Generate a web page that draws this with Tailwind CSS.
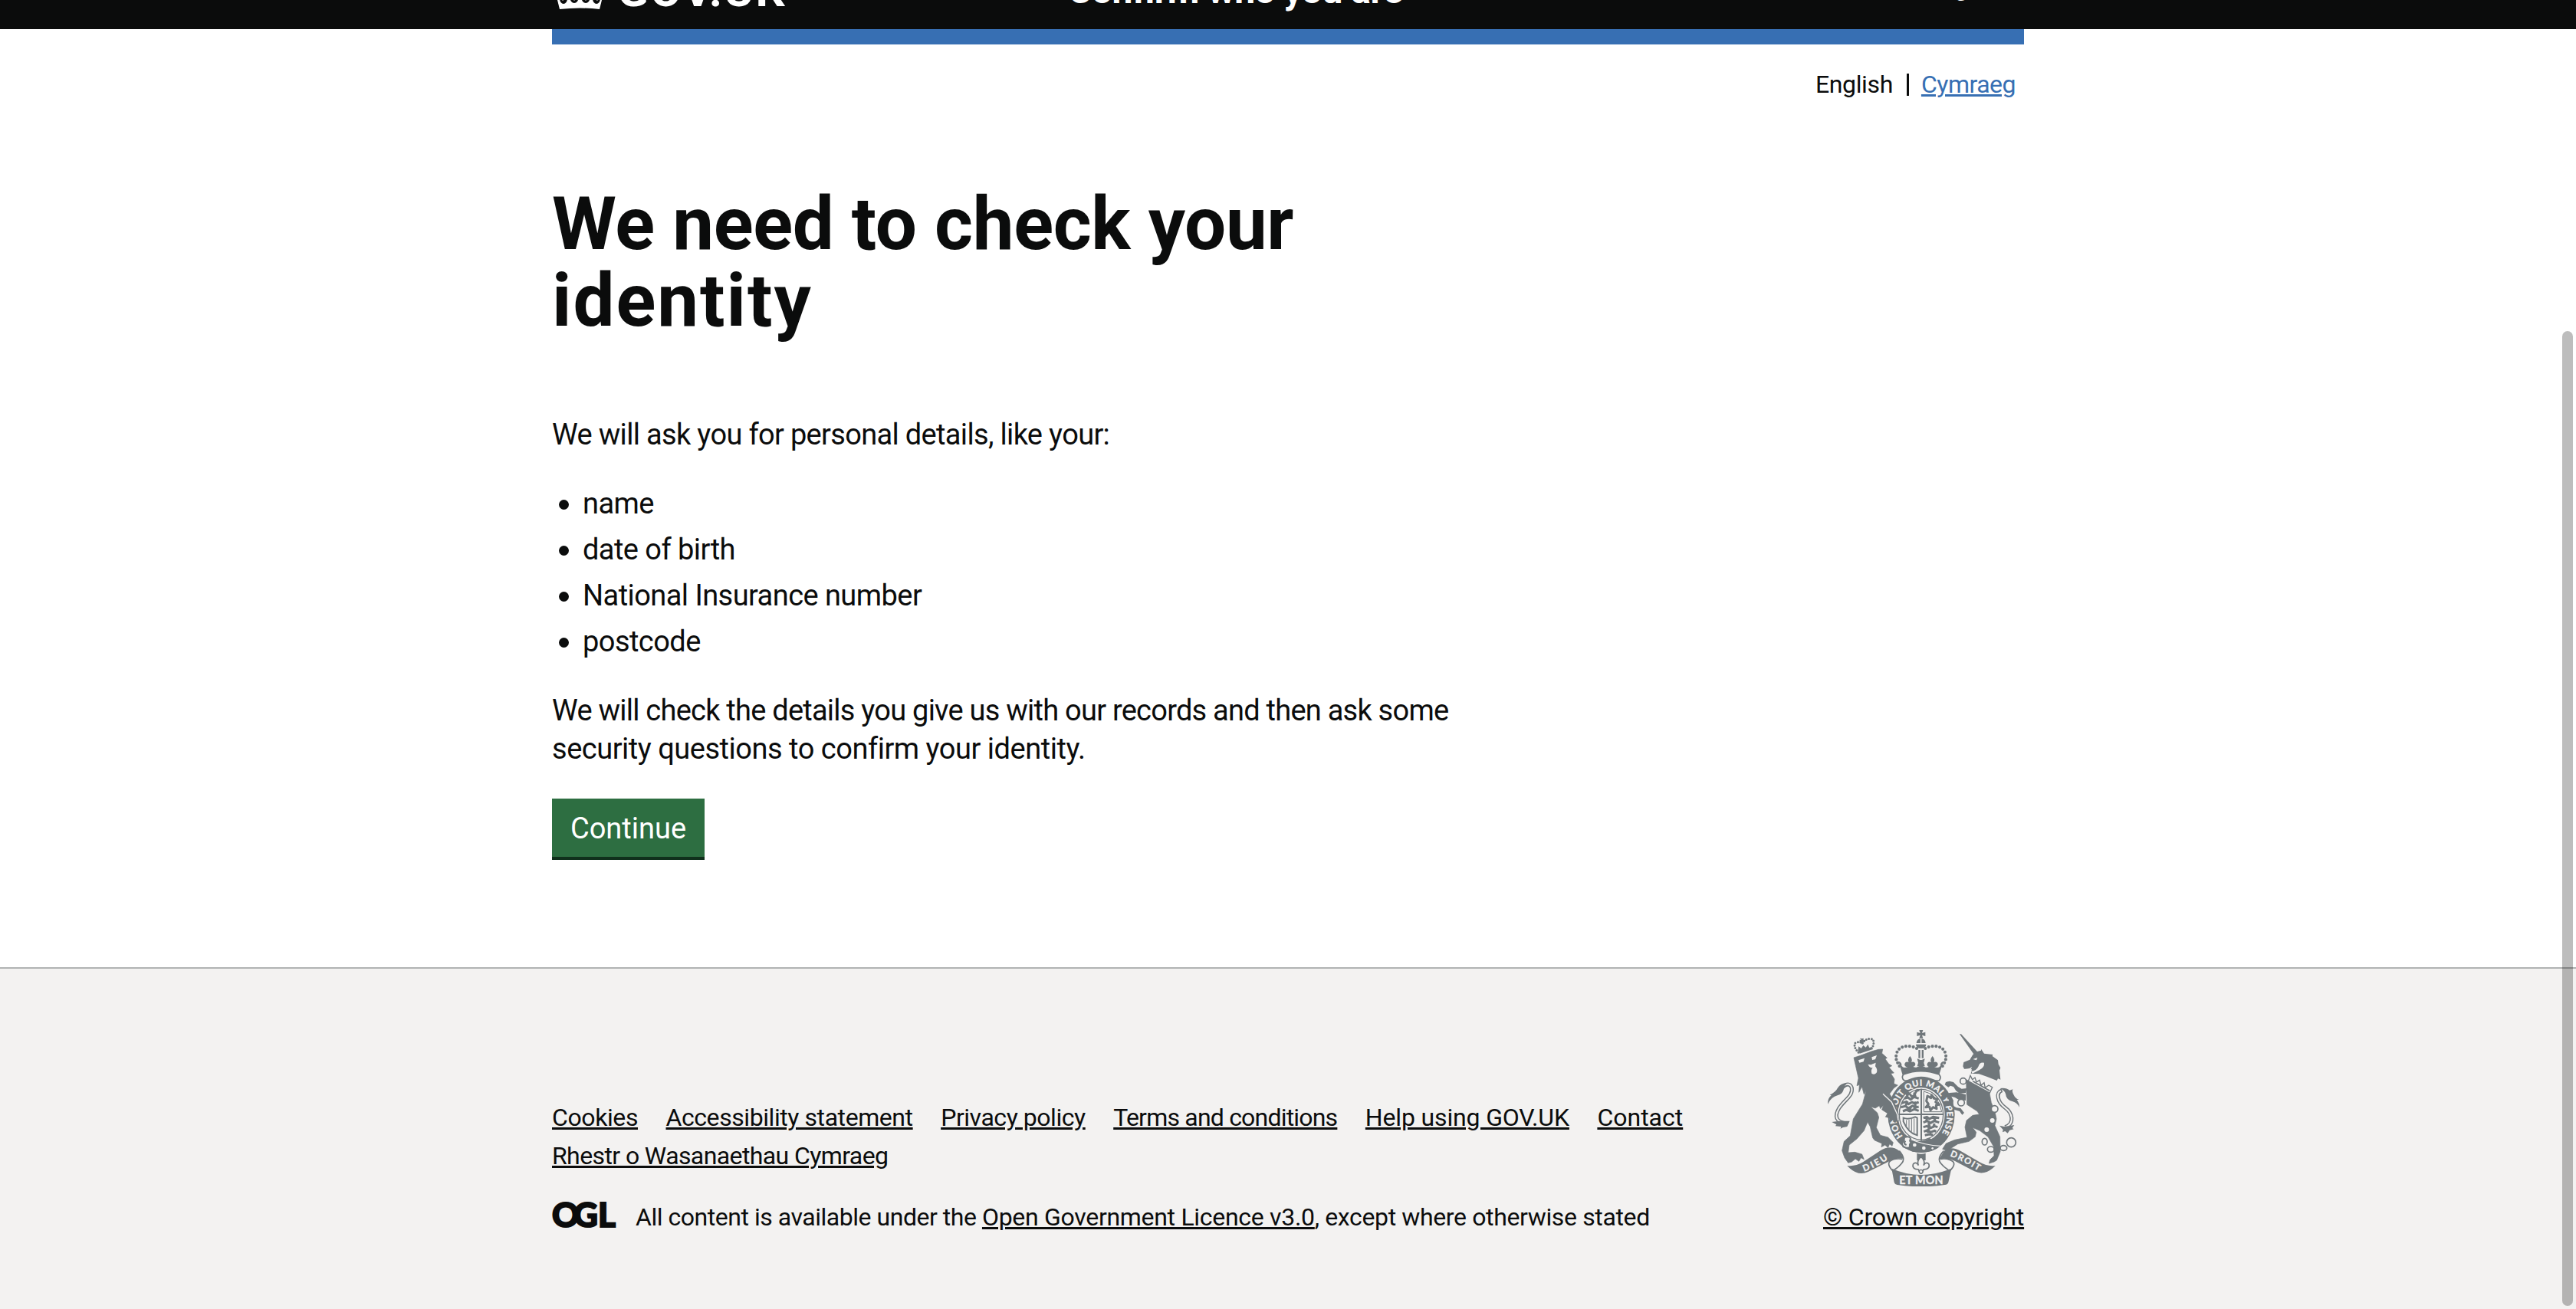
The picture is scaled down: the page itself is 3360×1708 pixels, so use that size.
<!DOCTYPE html>
<html lang="en">
<head>
<meta charset="utf-8">
<title>We need to check your identity</title>
<script src="https://cdn.jsdelivr.net/npm/@tailwindcss/browser@4"></script>
</head>
<body class="relative flex h-[1708px] flex-col overflow-hidden bg-white font-['Roboto',sans-serif] text-[38px] leading-[50px] text-[#0b0c0c]">

<header class="h-[38px] shrink-0 overflow-hidden bg-[#0b0c0c] text-white">
  <div class="mx-auto flex h-full w-[1920px] items-end font-bold whitespace-nowrap">
    <a class="flex w-[673px] shrink-0 items-end">
      <svg class="mb-[26px] ml-[5px] h-[60px] w-[64px] shrink-0" viewBox="0 0 64 60" fill="#fff">
        <path d="M2 48 C-4 34 8 22 30 30 L28 20 H36 L34 30 C56 22 68 34 60 48 L57 60 Q32 57 5 60 Z"/>
        <g fill="#0b0c0c"><ellipse cx="10" cy="46" rx="5" ry="7"/><ellipse cx="24" cy="45" rx="5.500" ry="7"/><ellipse cx="39" cy="45" rx="5.500" ry="7"/><ellipse cx="53" cy="46" rx="5" ry="7"/></g>
        <path d="M9 41l4 4-4 4-3-4zM24 39l3 6-3 4-3-4zM39 39l3 6-3 4-3-4zM54 41l3 4-3 4-4-4z"/>
      </svg>
      <span class="mb-[20px] ml-[16px] text-[60px] leading-[60px] tracking-[1.8px]">GOV.UK</span>
    </a>
    <span class="mb-[20px] text-[48px] leading-[60px] tracking-[-0.5px]">Confirm who you are</span>
    <a class="mb-[24px] ml-auto text-[32px] leading-[60px]">Sign out</a>
  </div>
</header>

<main class="mx-auto w-[1920px] shrink-0">
  <div class="h-5 bg-[#376fb3]"></div>

  <nav class="mt-8 flex h-10 items-center justify-end pr-[11px] text-[32px] leading-10">
    <span class="pr-[18px] tracking-[-0.36px]">English</span>
    <span class="h-[29px] w-[3px] bg-[#0b0c0c]"></span>
    <a class="pl-[16px] tracking-[-0.5px] text-[#376fb3] underline decoration-[3px] underline-offset-2">Cymraeg</a>
  </nav>

  <h1 class="mt-[112px] text-[96px] leading-[100px] font-bold whitespace-nowrap"><span class="tracking-[-0.35px]">We need to check your</span><br><span class="tracking-[2px]">identity</span></h1>

  <p class="mt-[100px] tracking-[-0.67px]">We will ask you for personal details, like your:</p>

  <ul class="mt-10 flex flex-col gap-[10px] pl-[9px] tracking-[-0.56px]">
    <li class="flex items-center gap-[18px]"><span class="mt-[2px] size-[13px] rounded-full bg-[#0b0c0c]"></span>name</li>
    <li class="flex items-center gap-[18px]"><span class="mt-[2px] size-[13px] rounded-full bg-[#0b0c0c]"></span>date of birth</li>
    <li class="flex items-center gap-[18px]"><span class="mt-[2px] size-[13px] rounded-full bg-[#0b0c0c]"></span>National Insurance number</li>
    <li class="flex items-center gap-[18px]"><span class="mt-[2px] size-[13px] rounded-full bg-[#0b0c0c]"></span>postcode</li>
  </ul>

  <p class="mt-10 whitespace-nowrap"><span class="tracking-[-0.76px]">We will check the details you give us with our records and then ask some</span><br><span class="tracking-[-0.48px]">security questions to confirm your identity.</span></p>

  <button class="mt-10 block h-20 w-[199px] border-b-4 border-[#10301c] bg-[#2d6e41] pt-[2px] text-white">Continue</button>
</main>

<footer class="mt-[140px] grow border-t-2 border-[#b1b3b3] bg-[#f3f2f1] pt-20 text-[32px]">
  <div class="mx-auto flex w-[1920px] justify-between whitespace-nowrap">
    <div class="pt-[89px]">
      <ul class="flex w-[1500px] flex-wrap gap-x-[36.5px] leading-[50px] underline decoration-[3px] underline-offset-2">
        <li class="tracking-[-0.4px]">Cookies</li>
        <li class="tracking-[-0.43px]">Accessibility statement</li>
        <li class="tracking-[-0.46px]">Privacy policy</li>
        <li class="tracking-[-0.8px]">Terms and conditions</li>
        <li class="tracking-[-0.15px]">Help using GOV.UK</li>
        <li>Contact</li>
        <li class="tracking-[-0.6px]">Rhestr o Wasanaethau Cymraeg</li>
      </ul>
      <div class="mt-[35px] flex h-10 items-center leading-10">
        <svg class="mb-[6px] h-[34px] w-[84px] overflow-visible" viewBox="0 0 84 34" fill="#0b0c0c" stroke="#0b0c0c" stroke-width="2" font-family="Lato" font-weight="900" font-size="44"><text y="33"><tspan x="0">O</tspan><tspan x="28">G</tspan><tspan x="60">L</tspan></text></svg>
        <p class="ml-[25px]"><span class="tracking-[-0.47px]">All content is available under the </span><a class="tracking-[-0.3px] underline decoration-[3px] underline-offset-2">Open Government Licence v3.0</a><span class="tracking-[-0.37px]">, except where otherwise stated</span></p>
      </div>
    </div>

    <a class="flex w-[262px] flex-col items-center leading-10">
      <!-- Royal coat of arms -->
      <svg class="h-[204px] w-[250px]" viewBox="72 72 750 612" fill="#70777b" font-family="Lato" font-weight="700">
        <!-- crown -->
        <path d="M430 72h15l-4 12 13-4v16l-13-4 4 12h-15l4-12-13 4V80l13 4z"/>
        <path d="M419 123q2-16 16-17v17zM439 106q14 1 16 17h-16zM417 128h40q0 15-20 16-20-1-20-16z"/>
        <g fill="none" stroke="#70777b" stroke-width="12.500" stroke-linecap="round" stroke-dasharray="0 14.500">
          <path d="M420 144C396 130 352 130 342 162C334 188 346 200 354 216"/>
          <path d="M454 144C478 130 522 130 532 162C540 188 528 200 520 216"/>
        </g>
        <path d="M427 150h7v32h-7zM440 150h7v32h-7z"/>
        <path d="M422 184l12 5h6l12-5-4 16 4 14h-30l4-14z"/>
        <path d="M394 174q12 14 5 24 12-4 16 6 0 10-10 12h-26q-8-4-6-12 4-10 16-6-7-10 5-24zM482 174q12 14 5 24 12-4 16 6 0 10-10 12h-26q-8-4-6-12 4-10 16-6-7-10 5-24z"/>
        <path d="M349 194q14 4 12 18 8 12 24 4 8-6 4-16l10 2q0 18 20 16l18-8 18 8q20 2 20-16l10-2q-4 10 4 16 16 8 24-4-2-14 12-18l-18 56q-70-26-142-2z"/>
        <path d="M368 246q68-26 140 0 10 12 0 24H372q-14-10-4-24z" fill="#f3f2f1" stroke="#70777b" stroke-width="5"/>

        <!-- garter and shield -->
        <ellipse cx="438" cy="403" rx="131" ry="149"/>
        <ellipse cx="438" cy="403" rx="92" ry="106" fill="#f3f2f1"/>
        <ellipse cx="438" cy="403" rx="86" ry="99" fill="none" stroke="#70777b" stroke-width="4"/>
        <path d="M435 302h6v204h-6zM350 399h176v6H350z"/>
        <g fill="none" stroke="#70777b" stroke-width="9" stroke-linejoin="round">
          <path d="M376 324q12-12 20 2t18-6 14-8M372 340l14-4 10 8 14-10 18 6M362 358l18-6 8 10 14-8 10 6 16-6M358 374l18-4 12 8 16-10 10 8 14-4M366 390l14-6 14 6 16-8 18 6M388 318l-8 20M410 316l6 20M384 350l-8 22M412 352l4 20M398 372l-6 16"/>
          <path d="M446 416l14-4 10 8 14-8 24 4M446 434l16-6 12 8 14-8 20 6M446 452l14-4 14 8 16-8 12 4M448 470l14-6 12 8 16-6 6 4M452 484l18-4 14 2M462 414l-6 18M488 414l6 18M466 436l6 18M490 438l-6 16M468 456l-6 18"/>
          <path d="M462 330l14 8 2-12 10 14 12 2-6 12 14 10-12 2 2 14-14-6-10 12-4-14-14 2 10-12-8-12z" stroke-width="9"/>
        </g>
        <path d="M448 312q58 12 70 80h-70z" fill="none" stroke="#70777b" stroke-width="3"/>
        <path d="M368 416q20 8 46-4l8 4v68q-34-8-54-54z" fill="none" stroke="#70777b" stroke-width="6"/>
        <path d="M380 424v24M390 423v38M400 420v50M410 418v58" stroke="#70777b" stroke-width="3"/>
        <path id="g1" d="M366 488A100 117 0 1 1 512 486" fill="none"/>
        <text fill="#f3f2f1" font-size="33" stroke="#f3f2f1" stroke-width="1"><textPath href="#g1" startOffset="0" textLength="500" lengthAdjust="spacing">HONI SOIT QUI MAL Y PENSE</textPath></text>
        <path d="M372 492q26 16 62 14 22-2 36-12l44 32q-40 34-110 22l-40-18z"/>
        <path d="M392 498q60 26 122 28" fill="none" stroke="#f3f2f1" stroke-width="4"/>
        <circle cx="412" cy="522" r="7" fill="#f3f2f1"/><circle cx="448" cy="534" r="7" fill="#f3f2f1"/><circle cx="482" cy="535" r="4" fill="#f3f2f1"/>
        <path d="M372 492q22-6 24 6-6 8 2 14-8 8-4 18-10 6-22 0-12-8-8-18 8-6 8-20z" fill="#f3f2f1" stroke="#70777b" stroke-width="6"/>
        <path d="M376 506q-10 10 4 16" fill="none" stroke="#70777b" stroke-width="7"/>

        <!-- lion -->
        <path d="M198 104l8 2 6-2v8l7-2v8l-7-1v8h-9l1-8-7 1v-8l6 1zM192 152l54-14 3 9-52 17z"/>
        <path d="M190 152l3-16 10 8 8-12 10 8 8-12 6 14 8-2-2 6-46 14z"/>
        <path d="M192 160C176 144 170 120 188 120Q200 116 206 126Q218 106 238 106C258 106 252 130 246 142" fill="none" stroke="#70777b" stroke-width="9" stroke-linecap="round" stroke-dasharray="0 10.500"/>
        <path d="M174 180l26-8 42-16 28-8 17-1-3 16 20 18-7 4 14 20 12 7-11 6 19 22-12 2 14 22-2 18 15 6-16 12-16 22 16 26 16 44 4 36-10-6-4 14-10-12-10 6-2-14-16-4 8-14-22-14 6-18-12 14-4-12-16 10-18-6 26 24 6 18-10 40 16 30 30 8 20 20-4 14-10-8-6 14-12-10-14 8 2-14-28-12-8-10-10-44-10-18-14 34-28 32-30 24-4 30 26-2 28 8 8 20-12-6-8 14-14-10-14 12-14 4-14-20-10-28 8-36 24-22 12-66 36-58 14-52-8 14-8-30-12 22 2-30-10 4 6-30z" stroke="#70777b" stroke-width="2" stroke-linejoin="round"/>
        <path d="M288 322l34 32 22 48 4 24" fill="none" stroke="#f3f2f1" stroke-width="4"/>
        <path d="M192 190l24-8-4 14-16 4zM244 178l20-7-6 16-12 2zM226 206l14 2 10-4 10-4-2 14q10 12 6 24-8 12-20 4-4-14 4-22-14 0-18-14z" fill="#f3f2f1"/>
        <path d="M226 202q14-8 26-6l-10 12z"/>
        <path d="M142 438C106 430 96 412 116 378C138 344 172 330 166 298C160 280 144 282 130 296" fill="none" stroke="#70777b" stroke-width="15"/>
        <path d="M142 438C106 430 96 412 116 378C138 344 172 330 166 298C160 280 144 282 134 290" fill="none" stroke="#f3f2f1" stroke-width="6"/>
        <path d="M152 280q-16 6-18 26-6 18-24 22-24 6-38 34 0-24 14-34l-6-2q24-12 30-26 14-24 42-20zM158 428l-10 22-18 4-8 4 2-8-22-2 4-6-18-10 28-4z"/>

        <!-- unicorn -->
        <path d="M588 88l6 0 66 72-14 10z"/>
        <path d="M672 146l12 18 34 4-2 6 22 16 2 16 8 14-4 10 4 36-10-4-4 8-40-16-30-10-32-2 4-16-30-2-5-10 3-16 24-10 12-20 18-12 14-4z"/>
        <path d="M684 200q2 18-18 28-14 8-28 14l-4-8q20-2 28-20 4-18 22-14zM640 186l18-6-4 10zM603 226l24-4 10-6-8 14-22 6z" fill="#f3f2f1"/>
        <path d="M614 266l90 46 8 44 14 34 6 30-6 26 20 44 1 58-14 34-10 6-20 6 4-14 16-16-2-36-22-38-32-24-28-12 14 18-4 18-24 18-44 10-38 24h-10l-12-4 14-22 34-14 48-10-8-40 6-26 24-20 26-4-8-12-40-26-2-44z" stroke="#70777b" stroke-width="2" stroke-linejoin="round"/>
        <path d="M630 250l8 16 10-8 6 18 12-8 6 20 12-10 4 20 14-10 14 8-10 22-84-46z" fill="#f3f2f1" stroke="#70777b" stroke-width="4"/>
        <path d="M640 272l66 38" stroke="#70777b" stroke-width="5"/>
        <path d="M612 348l-26-2-16-10-14-4 8 16-2 20 14 8 16 2 14 18-8 8-10-14-20-6-18-18-6-26-14-8 18-14 28-2 36 8zM612 318l-24 2-14-10-10-16-12-4-8 6-14-10 4-10 14-4 16 4 18 18 14 8 20-2z"/>
        <g fill="#f3f2f1" stroke="#70777b" stroke-width="5"><circle cx="602" cy="272" r="12"/><circle cx="594" cy="356" r="13"/><circle cx="725" cy="381" r="13"/><ellipse cx="686" cy="509" rx="10" ry="13"/><ellipse cx="710" cy="539" rx="13" ry="11"/><ellipse cx="760" cy="534" rx="13" ry="10"/><circle cx="790" cy="512" r="18"/></g>
        <g fill="#f3f2f1"><circle cx="716" cy="426" r="9"/><circle cx="694" cy="462" r="9"/></g>
        <path d="M766 452C806 438 794 396 766 376C736 354 728 318 754 308" fill="none" stroke="#70777b" stroke-width="15"/>
        <path d="M766 452C806 438 794 396 766 376C736 354 728 318 750 310" fill="none" stroke="#f3f2f1" stroke-width="6"/>
        <path d="M746 300q24-4 38 8l12-4q-4 10 4 22 6 14 20 18l-8 2q10 12 10 28-10-18-26-22-26-6-28-30-4-14-22-22zM744 446l18 4 16-2 24-4-8 12 6 4-16 4-8 12-10-8-10 4 2-10z"/>

        <!-- motto ribbons -->
        <path d="M148 603q32 4 62-14l66-44q42-26 76 0l18 30q-32-4-60 12l-80 40q-42 20-82-24z"/>
        <path d="M728 603q-32 4-62-14l-72-42q-40-24-66-2l-20 32q34-6 62 8l76 40q42 20 82-22z"/>
        <g fill="none" stroke="#70777b" stroke-width="5">
          <path d="M352 545q26 30 10 48-14 18-36 30-22-24-12-36 16-14 50-10"/>
          <path d="M526 545q-28 30-12 48 14 18 36 30 24-24 12-36-16-14-50-10"/>
        </g>
        <path d="M322 614q114 50 234 0l-12 54q-2 8-14 10-92 14-186 0-10-2-12-10z"/>
        <path id="r1" d="M214 626q60-22 106-58" fill="none"/>
        <path id="r3" d="M550 565q50 18 124 66" fill="none"/>
        <g fill="#f3f2f1" stroke="#f3f2f1" stroke-width="1">
          <text font-size="35"><textPath href="#r1" textLength="106">DIEU</textPath></text>
          <text font-size="34"><textPath href="#r3" textLength="126">DROIT</textPath></text>
          <text x="352" y="674" font-size="43" textLength="172">ET MON</text>
        </g>
        <path d="M421 554q16 6 34 0v28h-34z"/>
        <path d="M437 568q18 16 10 34 8-16 20-6 6 14-8 20l-12 2q-4 14-10 16-6-2-10-16l-12-2q-14-6-8-20 12-10 20 6-8-18 10-34z" fill="#f3f2f1" stroke="#70777b" stroke-width="5"/>
        <circle cx="437" cy="626" r="7" fill="#f3f2f1" stroke="#70777b" stroke-width="4"/>
      </svg>
      <span class="mt-5 w-full tracking-[-0.17px] underline decoration-[3px] underline-offset-2">© Crown copyright</span>
    </a>
  </div>
</footer>

<!-- scrollbar thumb -->
<div class="absolute top-[432px] right-1 h-[1272px] w-[14px] rounded-full bg-black/26"></div>
</body>
</html>
